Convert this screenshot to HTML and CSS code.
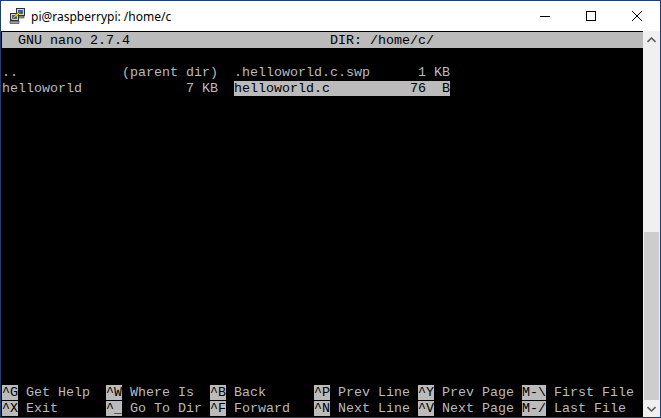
FILE: index.html
```html
<!DOCTYPE html>
<html lang="en">
<head>
  <meta charset="UTF-8">
  <title>pi@raspberrypi: /home/c</title>
  <link rel="stylesheet" href="styles.css">
</head>
<body>
  <div class="window">
    <div class="titlebar">
      <svg class="app-icon" width="16" height="16" viewBox="0 0 16 16">
        <!-- back computer -->
        <rect x="7.5" y="0.5" width="8" height="7" fill="#d8d8d8" stroke="#303030"/>
        <rect x="9" y="2" width="5" height="4" fill="#2c5fb8"/>
        <rect x="8" y="8" width="7" height="2" fill="#a0a0a0" stroke="#303030" stroke-width="0.6"/>
        <!-- front computer -->
        <rect x="1.5" y="5.5" width="8" height="7" fill="#d8d8d8" stroke="#303030"/>
        <rect x="3" y="7" width="5" height="4" fill="#2c5fb8"/>
        <rect x="1" y="13" width="9" height="2.5" fill="#a0a0a0" stroke="#303030" stroke-width="0.6"/>
        <!-- bolt -->
        <path d="M2 12 L7 8.5 L6 10 L12 4 L9.5 5 L10.5 3.5 L5 8 L6 7 Z" fill="#f2d21c" stroke="#6b5a00" stroke-width="0.5"/>
      </svg>
      <span class="title">pi@raspberrypi: /home/c</span>
      <div class="controls">
        <div class="ctl">
          <svg width="10" height="10" viewBox="0 0 10 10"><path d="M0 5.5 H10" stroke="#000" stroke-width="1"/></svg>
        </div>
        <div class="ctl">
          <svg width="10" height="10" viewBox="0 0 10 10"><rect x="0.5" y="0.5" width="9" height="9" fill="none" stroke="#000"/></svg>
        </div>
        <div class="ctl">
          <svg width="10" height="10" viewBox="0 0 10 10"><path d="M0 0 L10 10 M10 0 L0 10" stroke="#000" stroke-width="1"/></svg>
        </div>
      </div>
    </div>

    <div class="body">
      <div class="term">
        <div class="row rev">  GNU nano 2.7.4                         DIR: /home/c/                         </div>
        <div class="row"></div>
        <div class="row">..             (parent dir)  .helloworld.c.swp      1 KB</div>
        <div class="row">helloworld             7 KB  <span class="hl">helloworld.c          76  B</span></div>
        <div class="row"></div>
        <div class="row"></div>
        <div class="row"></div>
        <div class="row"></div>
        <div class="row"></div>
        <div class="row"></div>
        <div class="row"></div>
        <div class="row"></div>
        <div class="row"></div>
        <div class="row"></div>
        <div class="row"></div>
        <div class="row"></div>
        <div class="row"></div>
        <div class="row"></div>
        <div class="row"></div>
        <div class="row"></div>
        <div class="row"></div>
        <div class="row"></div>
        <div class="row"><span class="hl">^G</span> Get Help  <span class="hl">^W</span> Where Is  <span class="hl">^B</span> Back      <span class="hl">^P</span> Prev Line <span class="hl">^Y</span> Prev Page <span class="hl">M-\</span> First File</div>
        <div class="row"><span class="hl">^X</span> Exit      <span class="hl">^_</span> Go To Dir <span class="hl">^F</span> Forward   <span class="hl">^N</span> Next Line <span class="hl">^V</span> Next Page <span class="hl">M-/</span> Last File</div>
      </div>

      <div class="scrollbar">
        <div class="arrow">
          <svg width="9" height="6" viewBox="0 0 9 6"><path d="M0.5 5 L4.5 1 L8.5 5" fill="none" stroke="#606060" stroke-width="1.6"/></svg>
        </div>
        <div class="track"></div>
        <div class="thumb"></div>
        <div class="arrow">
          <svg width="9" height="6" viewBox="0 0 9 6"><path d="M0.5 1 L4.5 5 L8.5 1" fill="none" stroke="#606060" stroke-width="1.6"/></svg>
        </div>
      </div>
    </div>
  </div>
</body>
</html>
```

FILE: styles.css
```css
body {
  margin: 0;
  background: #ffffff;
}

.window {
  width: 661px;
  height: 418px;
  box-sizing: border-box;
  border: 1px solid #1d3f73;
  display: flex;
  flex-direction: column;
  background: #ffffff;
}

.titlebar {
  height: 30px;
  display: flex;
  align-items: center;
  background: #ffffff;
}

.app-icon {
  margin-left: 8px;
  margin-right: 6px;
}

.title {
  font-family: "Noto Sans", "Open Sans", sans-serif;
  font-size: 12px;
  color: #000000;
}

.controls {
  margin-left: auto;
  display: flex;
  height: 100%;
}

.ctl {
  width: 46px;
  height: 100%;
  display: flex;
  align-items: center;
  justify-content: center;
}

.body {
  flex: 1;
  display: flex;
  min-height: 0;
}

.term {
  width: 642px;
  box-sizing: border-box;
  padding-top: 1px;
  padding-left: 1px;
  background: #000000;
  color: #bbbbbb;
  font-family: "Liberation Mono", "DejaVu Sans Mono", monospace;
  font-size: 13.333px;
  overflow: hidden;
}

.row {
  height: 16px;
  line-height: 17px;
  white-space: pre;
}

.rev {
  background: #bbbbbb;
  color: #000000;
}

.hl {
  background: #bbbbbb;
  color: #000000;
}

.scrollbar {
  width: 17px;
  background: #f0f0f0;
  display: flex;
  flex-direction: column;
}

.arrow {
  height: 17px;
  display: flex;
  align-items: center;
  justify-content: center;
}

.track {
  flex: 1;
}

.thumb {
  height: 168px;
  margin: 0 1px;
  background: #cdcdcd;
}
```
